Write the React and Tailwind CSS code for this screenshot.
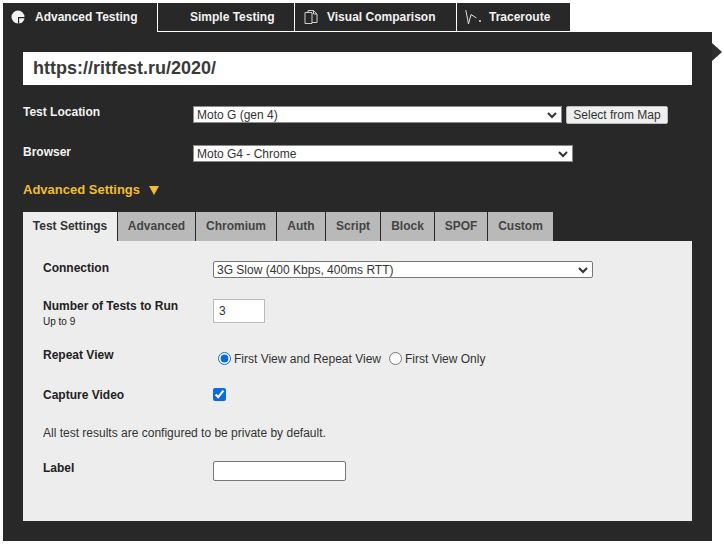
const sans = '[font-family:"Liberation_Sans",Arial,sans-serif]';

const topTabs = [
  { label: 'Advanced Testing', className: 'w-[154px] h-[29px] pb-[2px] pl-[8px] gap-[10px]', icon: 'pie' },
  { label: 'Simple Testing', className: 'w-[136px] h-[28px] pb-[1px] pl-[32px]' },
  { label: 'Visual Comparison', className: 'w-[161px] h-[28px] pb-[1px] pl-[9px] gap-[9px]', icon: 'pages' },
  { label: 'Traceroute', className: 'w-[113px] h-[28px] pb-[1px] pl-[8px] gap-[8px]', icon: 'trace' },
];

const subTabs = [
  { label: 'Test Settings', width: 'w-[94px]', active: true },
  { label: 'Advanced', width: 'w-[77px]' },
  { label: 'Chromium', width: 'w-[80px]' },
  { label: 'Auth', width: 'w-[48px]' },
  { label: 'Script', width: 'w-[54px]' },
  { label: 'Block', width: 'w-[53px]' },
  { label: 'SPOF', width: 'w-[52px]' },
  { label: 'Custom', width: 'w-[65px]' },
];

function TabIcon({ type }) {
  if (type === 'pie') {
    return (
      <svg width="14" height="14" viewBox="0 0 14 14" className="shrink-0">
        <path d="M7 0.5a6.5 6.5 0 1 0 0 13V7h6.5A6.5 6.5 0 0 0 7 0.5z" fill="#f2f2f2" />
        <path d="M8.2 8.2h5.3a6.5 6.5 0 0 1-5.3 5.3z" fill="#f2f2f2" />
      </svg>
    );
  }
  if (type === 'pages') {
    return (
      <svg width="14" height="14" viewBox="0 0 14 14" fill="none" stroke="#d0d0d0" strokeWidth="1" className="shrink-0">
        <path d="M1 2.5h7v11H1z" />
        <path d="M4 2.5V0.5h5.5l3.5 3.5v8.5H8" />
        <path d="M9.5 0.5V4H13" />
      </svg>
    );
  }
  return (
    <svg width="16" height="14" viewBox="0 0 16 14" fill="none" stroke="#e0e0e0" strokeWidth="1" className="shrink-0">
      <path d="M0.8 0l2.7 14L6 4.5 11.5 8" />
      <circle cx="15" cy="11" r="1" fill="#e0e0e0" stroke="none" />
    </svg>
  );
}

function Chevron() {
  return (
    <svg width="10" height="7" viewBox="0 0 10 7" fill="none" stroke="#333" strokeWidth="2" className="absolute right-[5px] top-[6px] pointer-events-none">
      <path d="M1 1l4 4 4-4" />
    </svg>
  );
}

function Select({ value, width, height, className }) {
  return (
    <div className={`relative ${width} ${height} shrink-0`}>
      <select
        defaultValue={value}
        className={`appearance-none block w-full h-full bg-white pl-[3px] pt-[1px] text-[12px] leading-[14px] text-[#333] outline-none ${className}`}
      >
        <option>{value}</option>
      </select>
      <Chevron />
    </div>
  );
}

export default function App() {
  return (
    <div className={`h-[544px] w-[724px] overflow-hidden bg-white pl-[3px] pt-[3px] ${sans}`}>
      {/* top tabs */}
      <div className="flex h-[29px] gap-[1px]">
        {topTabs.map((tab) => (
          <div
            key={tab.label}
            className={`flex items-center bg-[#282828] text-[12px] font-bold text-[#f2f2f2] ${tab.className}`}
          >
            {tab.icon && <TabIcon type={tab.icon} />}
            <span>{tab.label}</span>
          </div>
        ))}
      </div>

      {/* main panel */}
      <div className="relative h-[509px] w-[709px] bg-[#282828] px-5 pt-5">
        <div className="absolute left-[709px] top-[11px] h-0 w-0 border-y-[9px] border-l-[10px] border-y-transparent border-l-[#2f2f2f]" />

        <div className="flex h-[33px] w-[669px] items-center bg-white pl-[10px] text-[18px] font-bold text-[#3a3a3a]">
          https://ritfest.ru/2020/
        </div>

        <div className="mt-[21px] flex items-start">
          <label className="w-[170px] text-[12px] leading-[12px] font-bold text-[#f2f2f2]">Test Location</label>
          <Select value="Moto G (gen 4)" width="w-[369px]" height="h-[17px]" className="border border-[#8a8a8a]" />
          <button className="ml-[4px] h-[18px] w-[102px] rounded-[2px] border border-[#bbb] bg-[#efefef] text-[12px] leading-[15px] text-[#333]">
            Select from Map
          </button>
        </div>

        <div className="mt-[21px] flex items-start">
          <label className="w-[170px] pt-[1px] text-[12px] leading-[12px] font-bold text-[#f2f2f2]">Browser</label>
          <Select value="Moto G4 - Chrome" width="w-[380px]" height="h-[17px]" className="border border-[#8a8a8a]" />
        </div>

        <div className="mt-[20px] flex h-[16px] items-center gap-[9px] text-[13px] font-bold text-[#f0be2e]">
          <span>Advanced Settings</span>
          <svg width="10" height="9" viewBox="0 0 10 9">
            <path d="M0 0h10L5 9z" fill="#f0be2e" />
          </svg>
        </div>

        {/* settings tabs */}
        <div className="mt-[14px] flex h-[29px] gap-[1px]">
          {subTabs.map((tab) => (
            <div
              key={tab.label}
              className={`flex items-center justify-center pb-[1px] text-[12px] font-bold ${tab.width} ${
                tab.active ? 'bg-[#ededed] text-[#333]' : 'bg-[#b9b9b9] text-[#444]'
              }`}
            >
              {tab.label}
            </div>
          ))}
        </div>

        <div className="h-[280px] w-[669px] bg-[#ededed] px-5 pt-5 text-[12px] text-[#222]">
          <div className="flex items-start">
            <label className="w-[170px] pt-[1px] leading-[12px] font-bold">Connection</label>
            <Select value="3G Slow (400 Kbps, 400ms RTT)" width="w-[380px]" height="h-[17px]" className="rounded-[2px] border border-[#777]" />
          </div>

          <div className="mt-[21px] flex items-start">
            <div className="w-[170px]">
              <div className="pt-[1px] leading-[12px] font-bold">Number of Tests to Run</div>
              <div className="mt-[5px] text-[10px] leading-[10px]">Up to 9</div>
            </div>
            <input
              readOnly
              value="3"
              className="h-[24px] w-[52px] border border-[#bbb] bg-white pl-[5px] text-[12px] text-[#333] outline-none"
            />
          </div>

          <div className="mt-[21px] flex items-start">
            <label className="w-[170px] pt-[1px] leading-[12px] font-bold">Repeat View</label>
            <div className="mt-[3px] ml-[5px] flex h-[14px] items-center text-[#333]">
              <input type="radio" name="repeat" defaultChecked className="m-0 h-[13px] w-[13px] accent-[#0b69e3]" />
              <span className="ml-[3px] pt-[2px]">First View and Repeat View</span>
              <input type="radio" name="repeat" className="m-0 ml-[8px] h-[13px] w-[13px]" />
              <span className="ml-[3px] pt-[2px]">First View Only</span>
            </div>
          </div>

          <div className="mt-[23px] flex items-start">
            <label className="w-[170px] pt-[1px] leading-[12px] font-bold">Capture Video</label>
            <input type="checkbox" defaultChecked className="m-0 h-[13px] w-[13px] accent-[#0b69e3]" />
          </div>

          <p className="mt-[25px] leading-[14px] text-[#333]">All test results are configured to be private by default.</p>

          <div className="mt-[21px] flex items-start">
            <label className="w-[170px] pt-[1px] leading-[12px] font-bold">Label</label>
            <input className="h-[20px] w-[133px] rounded-[2px] border border-[#777] bg-white outline-none" />
          </div>
        </div>
      </div>
    </div>
  );
}
